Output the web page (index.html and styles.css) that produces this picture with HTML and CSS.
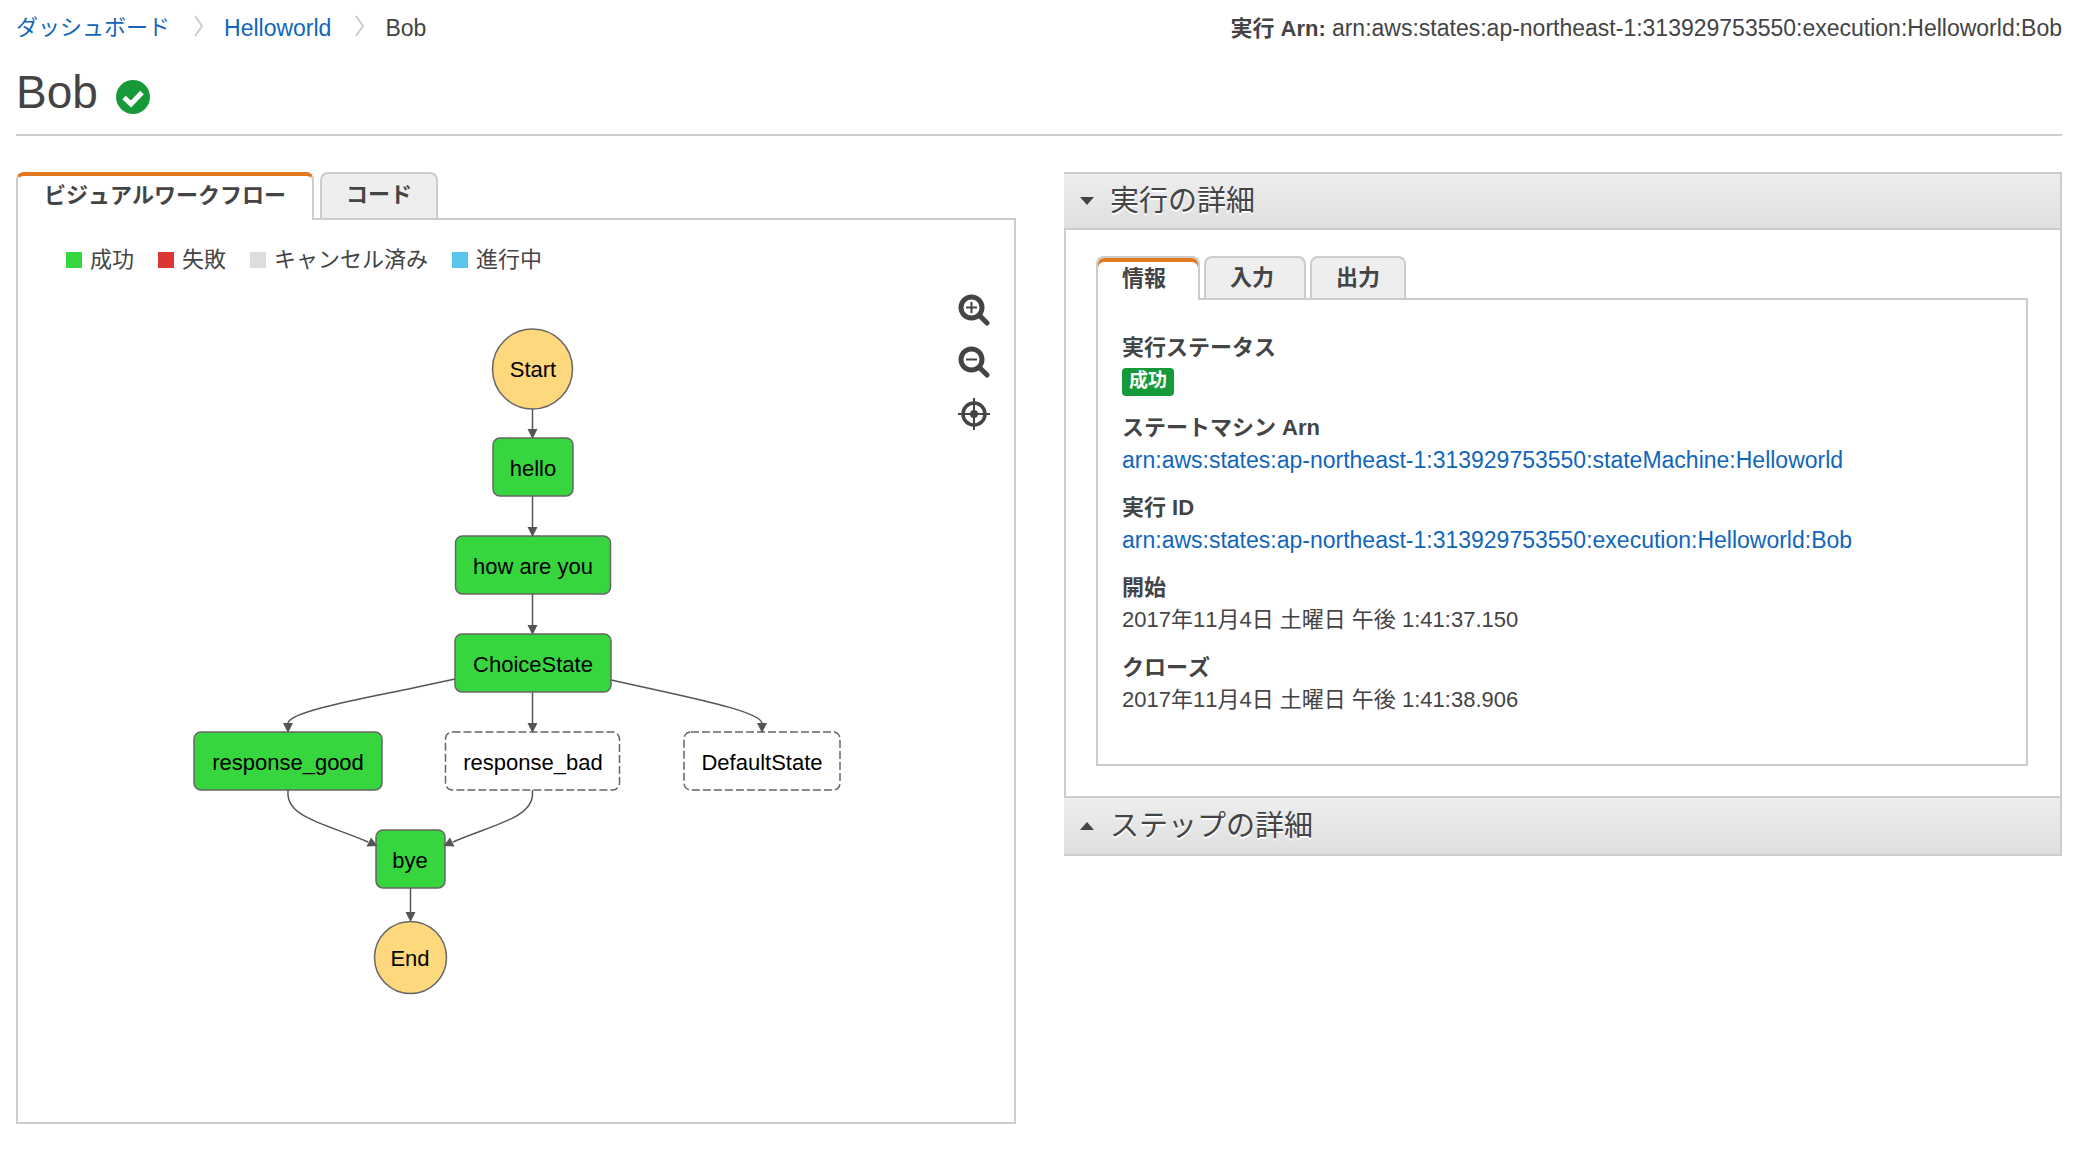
FILE: index.html
```html
<!DOCTYPE html>
<html lang="ja">
<head>
<meta charset="utf-8">
<meta name="viewport" content="width=device-width, initial-scale=1">
<title>Bob</title>
<link rel="stylesheet" href="styles.css">
</head>
<body>
<div class="page">
  <header class="page-header">
    <div class="topline">
      <nav class="breadcrumb" aria-label="パンくずリスト">
        <a href="#dashboard">ダッシュボード</a>
        <svg class="chevron" viewBox="0 0 10 22" aria-hidden="true"><path d="M1 1 L8 11 L1 21"/></svg>
        <a class="latin" href="#helloworld">Helloworld</a>
        <svg class="chevron" viewBox="0 0 10 22" aria-hidden="true"><path d="M1 1 L8 11 L1 21"/></svg>
        <span class="latin" aria-current="page">Bob</span>
      </nav>
      <div><strong>実行 Arn:</strong> <span class="latin">arn:aws:states:ap-northeast-1:313929753550:execution:Helloworld:Bob</span></div>
    </div>
    <div class="title-row">
      <h1>Bob</h1>
      <svg class="status-icon" viewBox="0 0 34 34" role="img" aria-label="成功">
        <circle cx="17" cy="17" r="17" fill="#169a39"/>
        <path d="M8 17.500 L15 24 L26 12.500" fill="none" stroke="#fff" stroke-width="5"/>
      </svg>
    </div>
  </header>

  <main class="columns">
    <section class="workflow">
      <div class="tabs" role="tablist">
        <button class="tab tab-active" type="button" role="tab" aria-selected="true">ビジュアルワークフロー</button>
        <button class="tab" type="button" role="tab" aria-selected="false">コード</button>
      </div>
      <div class="tab-panel graph-panel" role="tabpanel">
        <ul class="legend">
          <li><span class="swatch swatch-success"></span>成功</li>
          <li><span class="swatch swatch-failed"></span>失敗</li>
          <li><span class="swatch swatch-cancelled"></span>キャンセル済み</li>
          <li><span class="swatch swatch-running"></span>進行中</li>
        </ul>
        <svg class="graph" viewBox="18 290 996 720" width="996" height="720">
          <g class="edges">
            <path d="M532.500 409 V429"/>
            <path d="M532.500 496 V527"/>
            <path d="M532.500 594 V625"/>
            <path d="M455 679 L413 688 C371 697 290 711 288 723"/>
            <path d="M532.500 692 V723"/>
            <path d="M611 680 L661 691 C711 702 760 713 762 723"/>
            <path d="M288 790 V794 C288 818 329 825 368 842"/>
            <path d="M532.500 790 V794 C532.500 818 492 825 453 842"/>
            <path d="M410.500 888 V912"/>
          </g>
          <g class="node terminal"><circle cx="532.500" cy="369" r="40"/><text x="533" y="377">Start</text></g>
          <g class="node done"><rect x="493" y="438" width="80" height="58" rx="7"/><text x="533" y="476">hello</text></g>
          <g class="node done"><rect x="455.500" y="536" width="155" height="58" rx="7"/><text x="533" y="574">how are you</text></g>
          <g class="node done"><rect x="455" y="634" width="156" height="58" rx="7"/><text x="533" y="672">ChoiceState</text></g>
          <g class="node done"><rect x="194" y="732" width="188" height="58" rx="7"/><text x="288" y="770">response_good</text></g>
          <g class="node idle"><rect x="445.500" y="732" width="174" height="58" rx="7"/><text x="533" y="770">response_bad</text></g>
          <g class="node idle"><rect x="684" y="732" width="156" height="58" rx="7"/><text x="762" y="770">DefaultState</text></g>
          <g class="node done"><rect x="376" y="830" width="69" height="58" rx="7"/><text x="410" y="868">bye</text></g>
          <g class="node terminal"><circle cx="410.500" cy="957.500" r="36"/><text x="410" y="966">End</text></g>
          <g class="tips">
            <path d="M527.500 429 H537.500 L532.500 439 Z"/>
            <path d="M527.500 527 H537.500 L532.500 537 Z"/>
            <path d="M527.500 625 H537.500 L532.500 635 Z"/>
            <path d="M283 723 H293 L288 733 Z"/>
            <path d="M527.500 723 H537.500 L532.500 733 Z"/>
            <path d="M757 723 H767 L762 733 Z"/>
            <path d="M371 837.500 L366.500 846.500 L377.500 846 Z"/>
            <path d="M450 837.500 L454.500 846.500 L443.500 846 Z"/>
            <path d="M405.500 912 H415.500 L410.500 922 Z"/>
          </g>
        </svg>
        <div class="graph-tools">
          <button type="button" aria-label="拡大">
            <svg viewBox="0 0 32 32"><circle cx="13.500" cy="13.500" r="10.500" stroke-width="5"/><path d="M22 22 L29 29" stroke-width="5" stroke-linecap="round"/><path d="M8 13.500 H19 M13.500 8 V19" stroke-width="2"/></svg>
          </button>
          <button type="button" aria-label="縮小">
            <svg viewBox="0 0 32 32"><circle cx="13.500" cy="13.500" r="10.500" stroke-width="5"/><path d="M22 22 L29 29" stroke-width="5" stroke-linecap="round"/><path d="M8 13.500 H19" stroke-width="2"/></svg>
          </button>
          <button type="button" aria-label="中央に表示">
            <svg viewBox="0 0 32 32"><circle cx="16" cy="16" r="11" stroke-width="3.500"/><path d="M0 16 H32 M16 0 V32" stroke-width="2"/><circle cx="16" cy="16" r="4" fill="#444" stroke="none"/></svg>
          </button>
        </div>
      </div>
    </section>

    <section class="details">
      <h2><button class="section-header section-open" type="button" aria-expanded="true">
        <svg class="caret" viewBox="0 0 14 8" aria-hidden="true"><path d="M0 0 H14 L7 8 Z"/></svg>実行の詳細
      </button></h2>
      <div class="section-body">
        <div class="tabs subtabs" role="tablist">
          <button class="tab tab-active" type="button" role="tab" aria-selected="true">情報</button>
          <button class="tab" type="button" role="tab" aria-selected="false">入力</button>
          <button class="tab" type="button" role="tab" aria-selected="false">出力</button>
        </div>
        <div class="tab-panel info-panel" role="tabpanel">
          <dl>
            <div><dt>実行ステータス</dt><dd><span class="badge">成功</span></dd></div>
            <div><dt>ステートマシン Arn</dt><dd><a class="latin" href="#state-machine">arn:aws:states:ap-northeast-1:313929753550:stateMachine:Helloworld</a></dd></div>
            <div><dt>実行 ID</dt><dd><a class="latin" href="#execution">arn:aws:states:ap-northeast-1:313929753550:execution:Helloworld:Bob</a></dd></div>
            <div><dt>開始</dt><dd>2017年11月4日 土曜日 午後 1:41:37.150</dd></div>
            <div><dt>クローズ</dt><dd>2017年11月4日 土曜日 午後 1:41:38.906</dd></div>
          </dl>
        </div>
      </div>
      <h2><button class="section-header" type="button" aria-expanded="false">
        <svg class="caret" viewBox="0 0 14 8" aria-hidden="true"><path d="M0 8 H14 L7 0 Z"/></svg>ステップの詳細
      </button></h2>
    </section>
  </main>
</div>
</body>
</html>
```
FILE: styles.css
```css
* {
  box-sizing: border-box;
}

body {
  margin: 0;
  background: #fff;
  color: #444;
  font-family: "Liberation Sans", "Noto Sans CJK JP", sans-serif;
  font-size: 22px;
  font-kerning: none;
  line-height: 32px;
}

a {
  color: #1166bb;
  text-decoration: none;
}

h1,
h2,
ul,
dl,
dd {
  margin: 0;
  padding: 0;
  font-weight: normal;
}

button {
  margin: 0;
  color: inherit;
  font: inherit;
  font-kerning: none;
  cursor: pointer;
}

.latin {
  font-size: 23px;
}

.page {
  display: flex;
  flex-direction: column;
  min-height: 100vh;
  padding: 12px 32px 28px 16px;
}

/* Header */

.page-header {
  border-bottom: 2px solid #ccc;
  margin-bottom: 36px;
}

.topline {
  display: flex;
  justify-content: space-between;
  gap: 32px;
  height: 32px;
}

.breadcrumb {
  display: flex;
  align-items: center;
}

.chevron {
  width: 10px;
  height: 22px;
  margin: 0 20px 4px 24px;
  fill: none;
  stroke: #ccc;
  stroke-width: 2;
}

.title-row {
  display: flex;
  align-items: center;
  gap: 18px;
  height: 90px;
}

h1 {
  padding-top: 6px;
  font-size: 46px;
  line-height: 56px;
}

.status-icon {
  width: 34px;
  height: 34px;
  margin-top: 16px;
}

/* Tabs */

.columns {
  display: grid;
  grid-template-columns: calc(50% - 23px) 1fr;
  gap: 48px;
  flex: 1;
}

.workflow {
  display: flex;
  flex-direction: column;
}

.tabs {
  display: flex;
  gap: 6px;
}

.tab {
  position: relative;
  height: 46px;
  padding: 0 24px 2px;
  border: 2px solid #ccc;
  border-bottom: 0;
  border-radius: 8px 8px 0 0;
  background: #eee;
  font-weight: bold;
  line-height: 32px;
}

.tab-active {
  height: 48px;
  margin-bottom: -2px;
  padding: 0 26px 4px;
  border-top: 4px solid #e07820;
  background: #fff;
  z-index: 1;
}

.subtabs {
  gap: 4px;
}

.subtabs .tab {
  height: 42px;
  padding: 0 30px 0 24px;
}

.subtabs .tab:last-child {
  padding-right: 24px;
}

.subtabs .tab-active {
  height: 44px;
  padding-right: 32px;
  border-top: 2px solid #ccc;
  box-shadow: inset 0 4px #e07820;
}

.tab-panel {
  border: 2px solid #ccc;
}

/* Workflow graph */

.graph-panel {
  position: relative;
  flex: 1;
}

.legend {
  display: flex;
  flex-wrap: wrap;
  gap: 0 24px;
  padding: 24px 48px 14px;
  list-style: none;
}

.legend li {
  display: flex;
  align-items: center;
  gap: 8px;
}

.swatch {
  width: 16px;
  height: 16px;
}

.swatch-success {
  background: #37d63e;
}

.swatch-failed {
  background: #dc3535;
}

.swatch-cancelled {
  background: #ddd;
}

.swatch-running {
  background: #59c7ec;
}

.graph {
  display: block;
  max-width: 100%;
}

.edges path {
  fill: none;
  stroke: #555;
  stroke-width: 1.5;
}

.tips path {
  fill: #555;
}

.node text {
  fill: #000;
  text-anchor: middle;
}

.node rect,
.node circle {
  stroke: #666;
  stroke-width: 1.5;
}

.done rect {
  fill: #37d63e;
}

.terminal circle {
  fill: #fdd87c;
}

.idle rect {
  fill: #fff;
  stroke-dasharray: 8 3;
}

.graph-tools {
  position: absolute;
  top: 74px;
  right: 24px;
  display: flex;
  flex-direction: column;
  gap: 20px;
}

.graph-tools button {
  width: 32px;
  height: 32px;
  padding: 0;
  border: 0;
  background: none;
}

.graph-tools svg {
  display: block;
  width: 32px;
  height: 32px;
  fill: none;
  stroke: #444;
}

/* Execution details */

.details {
  align-self: start;
}

.section-header {
  display: flex;
  align-items: center;
  gap: 16px;
  width: 100%;
  height: 60px;
  padding: 0 14px 0 16px;
  border: 2px solid #ccc;
  border-left: 0;
  background: linear-gradient(#eee, #dfdfdf);
  font-size: 29px;
  line-height: 40px;
  text-shadow: 0 2px #fff;
}

.section-open {
  height: 58px;
}

.caret {
  width: 14px;
  height: 8px;
  fill: #444;
}

.section-body {
  padding: 26px 32px 30px 30px;
  border: 2px solid #ccc;
  border-width: 0 2px;
}

.info-panel {
  padding: 32px 24px;
}

.info-panel dl > div {
  margin-bottom: 16px;
}

dt {
  font-weight: bold;
}

dd {
  height: 32px;
}

.badge {
  display: block;
  position: relative;
  top: 4px;
  width: 52px;
  height: 28px;
  border-radius: 4px;
  background: #169a39;
  color: #fff;
  font-size: 19px;
  font-weight: bold;
  line-height: 26px;
  text-align: center;
}
```
